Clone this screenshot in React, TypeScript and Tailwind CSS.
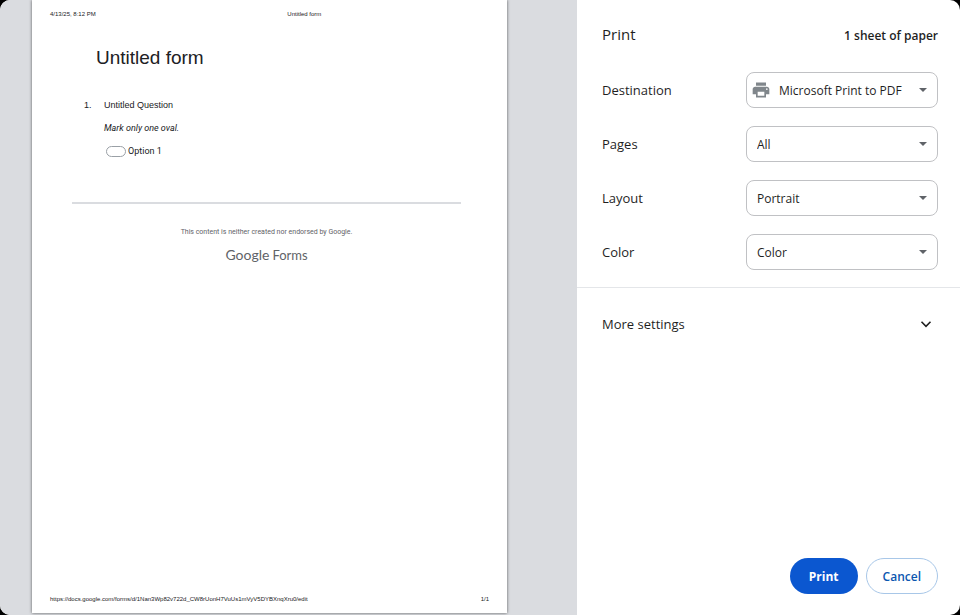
import { useState } from "react";
import { MdPrint } from "react-icons/md";

const settings = [
  { id: "destination", label: "Destination", options: ["Microsoft Print to PDF", "Save as PDF"], icon: true },
  { id: "pages", label: "Pages", options: ["All", "Odd pages only", "Even pages only", "Custom"] },
  { id: "layout", label: "Layout", options: ["Portrait", "Landscape"] },
  { id: "color", label: "Color", options: ["Color", "Black and white"] },
];

function SettingRow({ id, label, options, icon = false }) {
  const [value, setValue] = useState(options[0]);

  return (
    <div className="flex items-center justify-between">
      <label htmlFor={id} className="text-[13px] leading-5">
        {label}
      </label>
      <div className="relative w-48">
        {icon && <MdPrint className="pointer-events-none absolute top-2 left-[5px] size-5 text-[#80868b]" />}
        <select
          id={id}
          value={value}
          onChange={(e) => setValue(e.target.value)}
          className={`block h-9 w-full appearance-none rounded-lg border border-[#c0c1c4] bg-white pt-[2px] pr-8 text-xs ${icon ? "pl-8" : "pl-[10px]"}`}
        >
          {options.map((option) => (
            <option key={option}>{option}</option>
          ))}
        </select>
        <svg viewBox="0 0 8 4" className="pointer-events-none absolute top-4 right-[11px] h-1 w-2 fill-[#5f6368]">
          <path d="M0 0h8L4 4z" />
        </svg>
      </div>
    </div>
  );
}

function PagePreview() {
  return (
    <article className="flex flex-1 flex-col bg-white px-[18px] pt-[10px] pb-[10px] font-['Liberation_Sans',Arial,sans-serif] text-[#202124] shadow-[0_0_3px_rgba(0,0,0,0.6)]">
      {/* Header */}
      <header className="grid grid-cols-3 text-[6px] leading-2">
        <span>4/13/25, 8:12 PM</span>
        <span className="pl-[91px] whitespace-nowrap">Untitled form</span>
      </header>

      {/* Form */}
      <div className="mt-7 mr-7 ml-[22px]">
        <div className="border-b-2 border-[#dadce0] pb-[45px]">
          <h1 className="pl-6 text-[19px] leading-6">Untitled form</h1>
          <ol className="mt-[29px] pl-3 text-[9px] leading-3">
            <li className="flex">
              <span className="w-5">1.</span>
              <fieldset>
                <legend>Untitled Question</legend>
                <p className="mt-[11px] font-[Roboto,sans-serif] italic">Mark only one oval.</p>
                <label className="mt-[11px] flex items-center gap-[2px] pl-[2px] font-[Roboto,sans-serif]">
                  <input
                    type="radio"
                    name="question"
                    className="h-[11px] w-5 appearance-none rounded-full border border-[#9aa0a6] checked:bg-[#9aa0a6]"
                  />
                  Option 1
                </label>
              </fieldset>
            </li>
          </ol>
        </div>

        <div className="mt-6 flex flex-col items-center font-[Roboto,sans-serif] text-[#5f6368]">
          <p className="text-[7px] leading-2">This content is neither created nor endorsed by Google.</p>
          <p className="mt-[9px] flex items-baseline gap-[3px] font-[Lato,sans-serif] leading-5">
            <span className="text-sm">Google</span>
            <span className="text-[13px]">Forms</span>
          </p>
        </div>
      </div>

      {/* Footer */}
      <footer className="mt-auto flex justify-between text-[6px] leading-2">
        <span>https://docs.google.com/forms/d/1Nan3Wp82v722d_CW8rUonH7VuUs1mVyV5DYBXnqXru0/edit</span>
        <span>1/1</span>
      </footer>
    </article>
  );
}

export default function App() {
  return (
    <div className="min-h-screen bg-black">
      <main className="flex min-h-screen overflow-hidden rounded-[10px] bg-white font-['Open_Sans',sans-serif] text-[#1f1f1f]">
        <section aria-label="Preview" className="flex flex-1 bg-[#dadce0] pr-[70px] pb-[2px] pl-8">
          <PagePreview />
        </section>

        <aside className="flex w-[383px] shrink-0 flex-col">
          <header className="flex items-baseline justify-between pt-6 pr-[22px] pl-[25px]">
            <h1 className="text-[15px] leading-5">Print</h1>
            <span className="text-xs leading-5 font-semibold">1 sheet of paper</span>
          </header>

          <div className="flex flex-col gap-[18px] border-b border-[#e4e6e9] pt-[26px] pr-[22px] pb-[17px] pl-[25px]">
            {settings.map((setting) => (
              <SettingRow key={setting.id} {...setting} />
            ))}
          </div>

          <button type="button" className="flex items-center justify-between pt-[26px] pr-7 pl-[25px] text-[13px] leading-5">
            More settings
            <svg viewBox="0 0 12 12" className="size-3 fill-none stroke-[#1f1f1f] stroke-[1.6]">
              <path d="M1.500 3.800 6 8.300l4.500-4.500" />
            </svg>
          </button>

          <footer className="mt-auto flex justify-end gap-2 pr-[22px] pb-[21px] text-xs">
            <button type="button" className="h-9 rounded-full bg-[#0b57d0] px-[19px] pt-[2px] font-bold text-white">
              Print
            </button>
            <button
              type="button"
              className="h-9 rounded-full border border-[#a8c7e8] px-4 pt-[2px] font-semibold text-[#0b57b0]"
            >
              Cancel
            </button>
          </footer>
        </aside>
      </main>
    </div>
  );
}
